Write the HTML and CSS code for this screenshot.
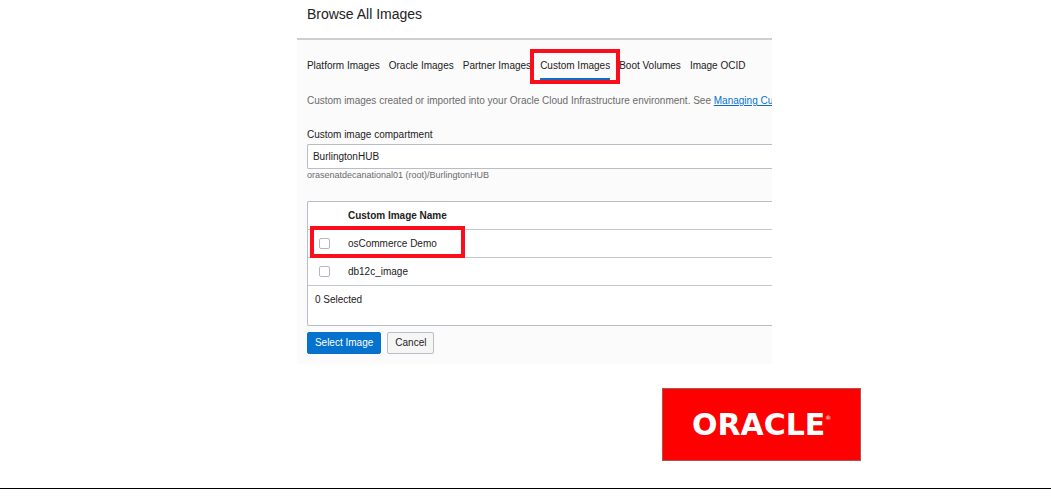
FILE: index.html
```html
<!DOCTYPE html>
<html lang="en">
<head>
<meta charset="utf-8">
<title>Browse All Images</title>
<link rel="stylesheet" href="styles.css">
</head>
<body>
<main class="slide">
  <section class="dialog">
    <h1 class="dialog-title">Browse All Images</h1>
    <div class="dialog-body">
      <div class="tabs" role="tablist">
        <button class="tab" role="tab" type="button">Platform Images</button>
        <button class="tab" role="tab" type="button">Oracle Images</button>
        <button class="tab" role="tab" type="button">Partner Images</button>
        <div class="tab-marked">
          <button class="tab tab-active" role="tab" type="button" aria-selected="true">Custom Images</button>
          <span class="mark mark-tab"></span>
        </div>
        <button class="tab" role="tab" type="button">Boot Volumes</button>
        <button class="tab" role="tab" type="button">Image OCID</button>
      </div>
      <p class="intro">Custom images created or imported into your Oracle Cloud Infrastructure environment. See <a class="link" href="#">Managing Cus</a></p>
      <label class="label" for="compartment">Custom image compartment</label>
      <select class="select" id="compartment"><option>BurlingtonHUB</option></select>
      <p class="hint">orasenatdecanational01 (root)/BurlingtonHUB</p>
      <div class="table-frame">
        <table class="table">
          <thead>
            <tr><td class="check-cell"></td><th class="name-cell" scope="col">Custom Image Name</th></tr>
          </thead>
          <tbody>
            <tr>
              <td class="check-cell"><input class="check" id="image-1" type="checkbox"></td>
              <td class="name-cell"><label for="image-1">osCommerce Demo</label></td>
            </tr>
            <tr>
              <td class="check-cell"><input class="check" id="image-2" type="checkbox"></td>
              <td class="name-cell"><label for="image-2">db12c_image</label></td>
            </tr>
          </tbody>
        </table>
        <p class="selected">0 Selected</p>
        <span class="mark mark-row"></span>
      </div>
      <div class="actions">
        <button class="button button-primary" type="button">Select Image</button>
        <button class="button" type="button">Cancel</button>
      </div>
    </div>
  </section>
  <div class="brand">
    <span class="brand-name">ORACLE</span><span class="brand-mark">®</span>
  </div>
  <hr class="rule">
</main>
</body>
</html>
```

FILE: styles.css
```css
* {
  box-sizing: border-box;
}

body {
  margin: 0;
  background: #fff;
  color: #222;
  font: 10px/14px "Liberation Sans", Arial, sans-serif;
}

p,
h1 {
  margin: 0;
}

button,
select {
  font: inherit;
  color: inherit;
}

.slide {
  display: flex;
  flex-direction: column;
}

.dialog {
  width: 45.2%;
  margin-left: 28.25%;
  overflow: hidden;
  white-space: nowrap;
}

.dialog-title {
  padding: 4px 10px 14px;
  font-size: 14px;
  line-height: 20px;
  font-weight: 400;
}

.dialog-body {
  display: flex;
  flex-direction: column;
  padding: 10px 0 10px 10px;
  border-top: 2px solid #cfcfcf;
  background: #fbfbfb;
}

.tabs {
  display: flex;
  gap: 9px;
}

.tab {
  flex: none;
  height: 30px;
  padding: 4px 0 0;
  border: 0;
  border-bottom: 2px solid transparent;
  background: none;
}

.tab-marked {
  position: relative;
}

.tab-active {
  border-bottom-color: #0572ce;
}

.mark {
  position: absolute;
  border: 4px solid #fc0d1b;
  pointer-events: none;
}

.mark-tab {
  inset: -1px -10px -4px;
}

.mark-row {
  top: 24px;
  left: 2px;
  width: 155px;
  height: 32px;
}

.intro {
  padding: 14px 0 20px;
  color: #6b6b6b;
}

.link {
  color: #0572ce;
}

.select {
  height: 25px;
  margin-top: 2px;
  padding: 0 5px;
  border: 1px solid #b9bec6;
  border-right: 0;
  border-radius: 2px 0 0 2px;
  background: #fff;
  appearance: none;
}

.hint {
  color: #6b6b6b;
  font-size: 9px;
  line-height: 12px;
}

.table-frame {
  position: relative;
  margin-top: 20px;
  border: 1px solid #b9bec6;
  border-right: 0;
  border-radius: 2px 0 0 2px;
  background: #fff;
}

.table {
  width: 100%;
  border-spacing: 0;
}

.table td,
.table th {
  height: 28px;
  padding: 0;
  border-bottom: 1px solid #c4c8ce;
  text-align: left;
}

.check-cell {
  width: 40px;
}

.check {
  display: block;
  width: 11px;
  height: 11px;
  margin: 0 0 0 11px;
  border: 1px solid #b3b7bd;
  border-radius: 2px;
  background: #fff;
  appearance: none;
}

.selected {
  padding: 7px 7px 18px;
}

.actions {
  display: flex;
  gap: 6px;
  padding-top: 6px;
}

.button {
  height: 22px;
  padding: 0 7px;
  border: 1px solid #b9bec6;
  border-radius: 2px;
  background: #f5f5f5;
}

.button-primary {
  border-color: #0572ce;
  background: #0572ce;
  color: #fff;
}

.brand {
  display: flex;
  align-items: center;
  justify-content: center;
  width: 199px;
  height: 73px;
  margin: 24px 0 0 63%;
  border: 1px solid #a55;
  background: #fe0000;
  color: #fff;
  font-family: "DejaVu Sans", sans-serif;
}

.brand-name {
  font-size: 30px;
  line-height: 40px;
  font-weight: 700;
}

.brand-mark {
  padding-bottom: 14px;
  font-size: 6px;
}

.rule {
  width: 100%;
  margin: 27px 0 8px;
  border: 0;
  border-top: 1px solid #000;
}
```
